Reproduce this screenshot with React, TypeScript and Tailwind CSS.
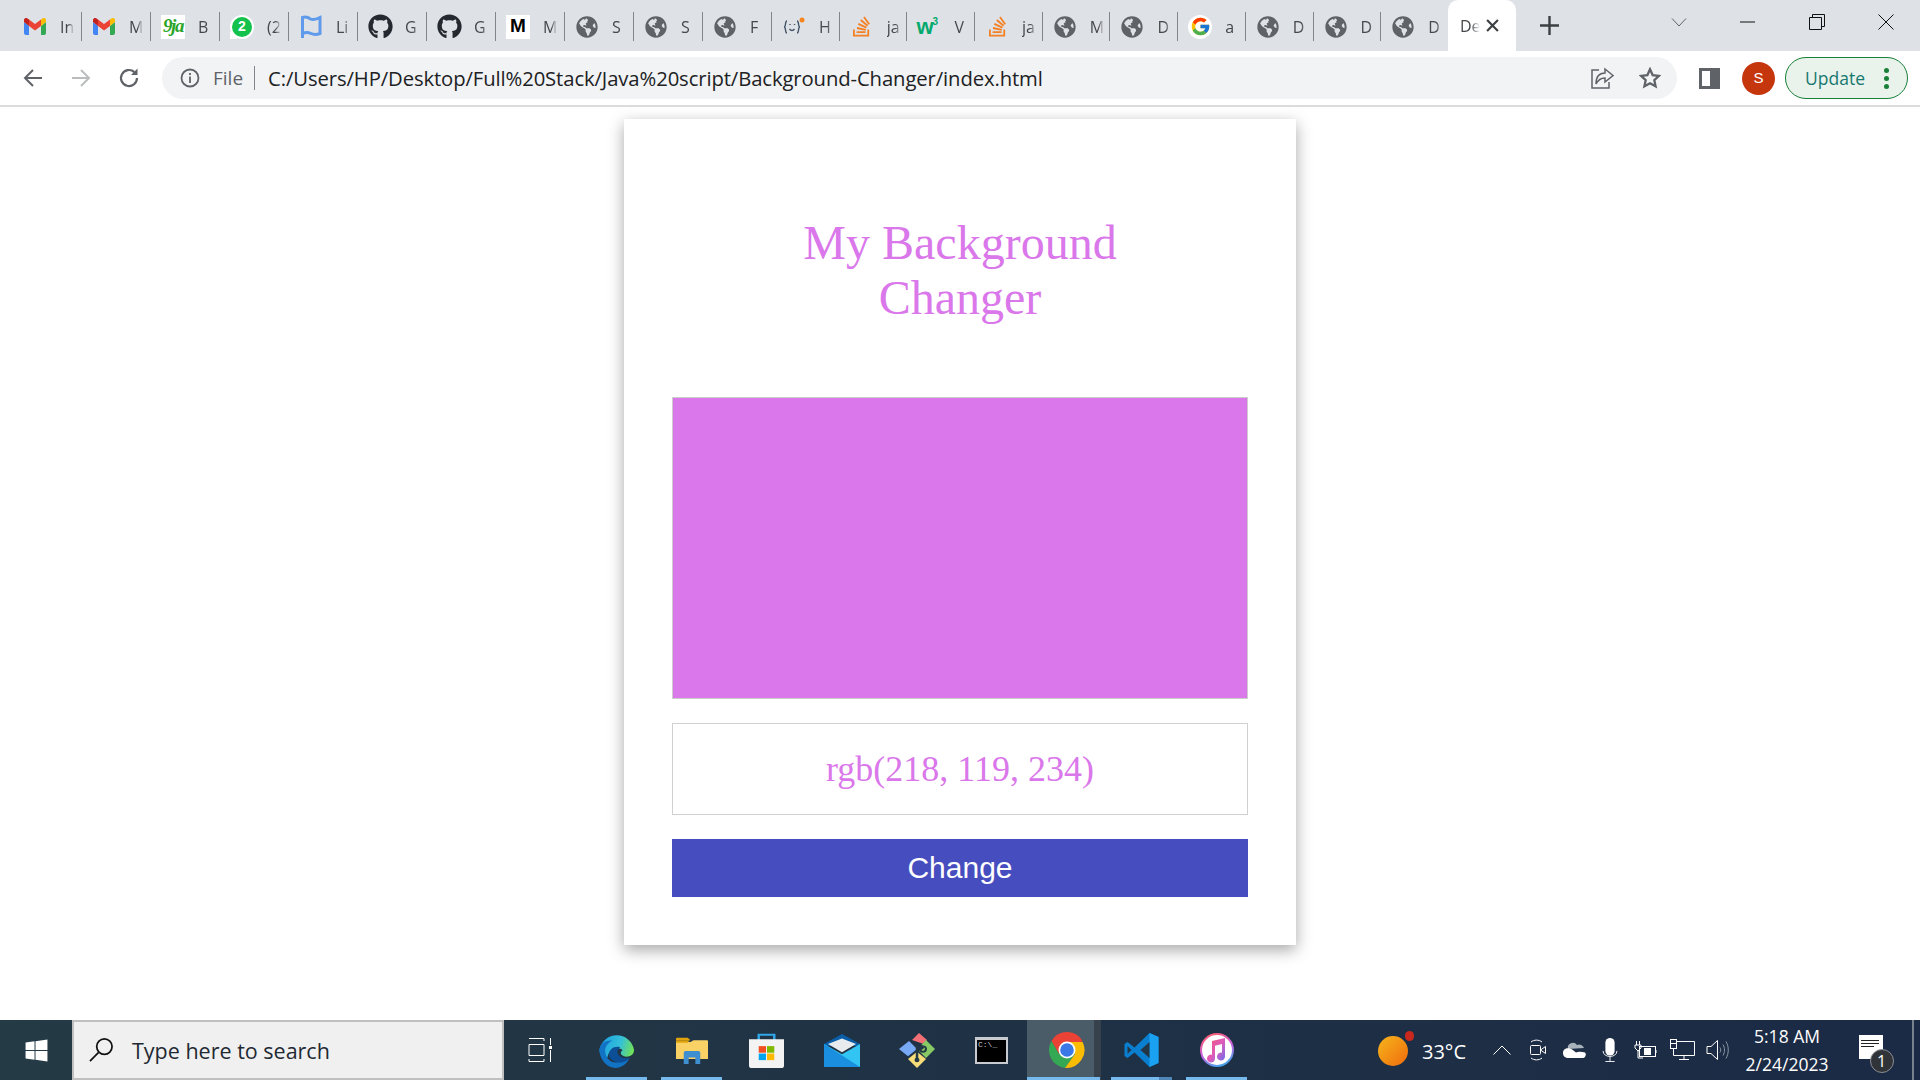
import React from "react";
import { FaGithub, FaGlobeAmericas, FaStackOverflow, FaWindows } from "react-icons/fa";
import { FcGoogle } from "react-icons/fc";

const Gmail = () => (
  <svg width="22" height="17" viewBox="0 0 22 17">
    <path d="M0 4v11a2 2 0 0 0 2 2h3V8z" fill="#4285f4" />
    <path d="M22 4v11a2 2 0 0 1-2 2h-3V8z" fill="#34a853" />
    <path d="M5 8 11 12.5 17 8V1.5L11 6 5 1.5z" fill="#ea4335" />
    <path d="M0 4 5 8V1.5L3.2.3A2 2 0 0 0 0 2z" fill="#c5221f" />
    <path d="M22 4 17 8V1.5L18.8.3A2 2 0 0 1 22 2z" fill="#fbbc04" />
  </svg>
);

const Nine = () => (
  <div className="w-[24px] h-[24px] bg-white flex items-center justify-center text-[19px] font-bold italic text-[#2aa52a] [font-family:'Liberation_Serif',serif] tracking-[-1.500px]">
    9ja
  </div>
);

const Whats = () => (
  <div className="relative w-[24px] h-[24px] rounded-full bg-white flex items-center justify-center">
    <div className="absolute left-0 bottom-0 w-[7px] h-[7px] bg-white" />
    <div className="relative w-[20px] h-[20px] rounded-full bg-[#12c24c] flex items-center justify-center text-white text-[14px] font-bold [font-family:'Liberation_Sans',sans-serif]">
      2
    </div>
  </div>
);

const Flag = () => (
  <svg width="22" height="24" viewBox="0 0 22 24" fill="none" stroke="#5f9bea" strokeWidth="3">
    <path d="M2.500 23V2.500c4-1.500 6 0 8 1.500 3 1.500 6 0 9.500-1.500v16c-4 1.500-6 1.500-9 0-3-1.500-5-1.500-8.500 0" />
  </svg>
);

const Medium = () => (
  <div className="w-[24px] h-[24px] bg-white flex items-center justify-center text-[19px] font-bold text-black [font-family:'Liberation_Sans',sans-serif]">
    M
  </div>
);

const Hacker = () => (
  <svg width="23" height="22" viewBox="0 0 23 22" fill="none" stroke="#44546a" strokeWidth="1.400">
    <path d="M4 5C1.500 5 3.500 11 1 11c2.500 0 .5 6 3 6M14 5c2.500 0 .5 6 3 6-2.500 0-.5 6-3 6" />
    <path d="M6.500 13c1.500 2 3.500 2 5 0M7 8v1M11.500 8v1" />
    <circle cx="19" cy="4" r="2.500" fill="#f6851f" stroke="none" />
  </svg>
);

const W3 = () => (
  <div className="w-[26px] flex items-start text-[#04aa6d] font-bold [font-family:'Liberation_Sans',sans-serif]">
    <span className="text-[22px] leading-[22px] tracking-[-1px]">w</span>
    <span className="text-[10px] leading-[12px]">3</span>
  </div>
);

const Globe = () => <FaGlobeAmericas className="text-[#5f6368]" size={22} />;
const Gh = () => <FaGithub className="text-[#24292f]" size={25} />;
const So = () => <FaStackOverflow className="text-[#f48024]" size={23} />;
const G = () => (
  <div className="w-[24px] h-[24px] rounded-full bg-white flex items-center justify-center">
    <FcGoogle size={21} />
  </div>
);

const tabs: [React.ReactNode, string, string][] = [
  [<Gmail />, "In", "w-[69px]"],
  [<Gmail />, "M", "w-[69px]"],
  [<Nine />, "B", "w-[69px]"],
  [<Whats />, "(2", "w-[69px]"],
  [<Flag />, "Li", "w-[69px]"],
  [<Gh />, "G", "w-[69px]"],
  [<Gh />, "G", "w-[69px]"],
  [<Medium />, "M", "w-[69px]"],
  [<Globe />, "S", "w-[69px]"],
  [<Globe />, "S", "w-[69px]"],
  [<Globe />, "F", "w-[69px]"],
  [<Hacker />, "H", "w-[67.700px]"],
  [<So />, "ja", "w-[67.700px]"],
  [<W3 />, "V", "w-[67.700px]"],
  [<So />, "ja", "w-[67.700px]"],
  [<Globe />, "M", "w-[67.700px]"],
  [<Globe />, "D", "w-[67.700px]"],
  [<G />, "a", "w-[67.700px]"],
  [<Globe />, "D", "w-[67.700px]"],
  [<Globe />, "D", "w-[67.700px]"],
  [<Globe />, "D", "w-[67.700px]"],
];

const TabStrip = () => (
  <div className="h-[51px] bg-[#dee1e6] flex pl-[13px]">
    {tabs.map(([icon, label, w], i) => (
      <div key={i} className={`${w} h-[37px] mt-[8px] flex items-center relative shrink-0`}>
        <div className="w-[44px] flex justify-center shrink-0">{icon}</div>
        <div className="w-[14px] ml-[3px] overflow-hidden whitespace-nowrap text-[16px] text-[#45474a] [font-family:'Open_Sans',sans-serif] [mask-image:linear-gradient(to_right,black_60%,transparent)]">
          {label}
        </div>
        {i < 20 && <div className="absolute right-0 top-[4px] w-[1px] h-[29px] bg-[#80868b]" />}
      </div>
    ))}
    <div className="w-[68px] h-[51px] -ml-[1px] bg-white rounded-t-[10px] flex items-center shrink-0 relative z-10">
      <div className="w-[20px] ml-[12px] overflow-hidden text-[16px] text-[#45474a] [font-family:'Open_Sans',sans-serif] [mask-image:linear-gradient(to_right,black_55%,transparent)]">
        De
      </div>
      <svg width="13" height="13" viewBox="0 0 12 12" className="ml-[6px]" stroke="#3c4043" strokeWidth="2">
        <path d="M1 1l10 10M11 1 1 11" />
      </svg>
    </div>
    <div className="w-[66px] flex items-center justify-center shrink-0 pl-[1px]">
      <svg width="19" height="19" viewBox="0 0 19 19" stroke="#3c4043" strokeWidth="2.400">
        <path d="M9.500 0v19M0 9.500h19" />
      </svg>
    </div>
    <div className="flex-1 flex justify-end items-start">
      <div className="w-[66px] h-[44px] flex items-center justify-center">
        <svg width="16" height="9" viewBox="0 0 16 9" fill="none" stroke="#5f6368"><path d="M1 .5l7 7.500 7-7.500" /></svg>
      </div>
      <div className="w-[70px] h-[44px] flex items-center justify-center">
        <svg width="15" height="2" viewBox="0 0 15 2" stroke="#111"><path d="M0 1h15" /></svg>
      </div>
      <div className="w-[70px] h-[44px] flex items-center justify-center">
        <svg width="16" height="16" viewBox="0 0 16 16" fill="none" stroke="#111"><path d="M.5 3.500h12v12H.5zM3.500 3.500v-3h12v12h-3" /></svg>
      </div>
      <div className="w-[68px] h-[44px] flex items-center justify-center">
        <svg width="16" height="16" viewBox="0 0 16 16" stroke="#111"><path d="M.5.500l15 15M15.500.500l-15 15" /></svg>
      </div>
    </div>
  </div>
);

const Toolbar = () => (
  <div className="h-[56px] bg-white border-b-2 border-[#dcdcdc] flex items-start pt-[6px]">
    <div className="w-[162px] h-[42px] flex items-center shrink-0">
      <svg width="20" height="20" viewBox="0 0 20 20" className="ml-[23px]" fill="none" stroke="#5f6368" strokeWidth="2"><path d="M19 10H2M10 2 2 10l8 8" /></svg>
      <svg width="20" height="20" viewBox="0 0 20 20" className="ml-[28px]" fill="none" stroke="#babcbe" strokeWidth="2"><path d="M1 10h17M10 2l8 8-8 8" /></svg>
      <svg width="24" height="24" viewBox="0 0 24 24" className="ml-[26px]" fill="none" stroke="#5f6368" strokeWidth="2.200"><path d="M20 12a8 8 0 1 1-2.600-5.900" /><path d="M20.500 2.500v6.500H14" fill="#5f6368" stroke="none" /></svg>
    </div>
    <div className="w-[1515px] h-[42px] rounded-full bg-[#f1f3f4] flex items-center shrink-0 text-[20px] text-[#202124] [font-family:'Open_Sans',sans-serif]">
      <svg width="20" height="20" viewBox="0 0 20 20" className="ml-[18px]" fill="none" stroke="#5f6368" strokeWidth="1.800">
        <circle cx="10" cy="10" r="8.500" />
        <path d="M10 8.500V15M10 5v2" />
      </svg>
      <span className="ml-[13px] text-[#5f6368] text-[19px]">File</span>
      <div className="w-[1px] h-[24px] bg-[#80868b] ml-[11px]" />
      <span className="ml-[13px] text-[20.250px] tracking-[-0.100px] whitespace-nowrap">C:/Users/HP/Desktop/Full%20Stack/Java%20script/Background-Changer/index.html</span>
      <svg width="24" height="24" viewBox="0 0 24 24" className="ml-auto -mr-[1px]" fill="none" stroke="#5f6368" strokeWidth="1.500">
        <path d="M9 4H2v18h17v-6" />
        <path d="M23 9.500 15 3v4c-6 0-9 4-9 11 2-4 4-6 9-6v4z" />
      </svg>
      <svg width="22" height="22" viewBox="0 0 24 24" className="ml-[26px] mr-[16px]" fill="none" stroke="#5f6368" strokeWidth="2.500">
        <path d="m12 2.500 2.900 6.300 6.900.8-5.100 4.700 1.400 6.800-6.100-3.400-6.100 3.400 1.400-6.800L2.300 9.600l6.900-.8z" />
      </svg>
    </div>
    <div className="h-[42px] flex items-center shrink-0">
      <div className="ml-[22px] w-[21px] h-[21px] border-[3px] border-[#5f6368] flex justify-end">
        <div className="w-[7px] h-full bg-[#5f6368]" />
      </div>
      <div className="ml-[22px] w-[33px] h-[33px] rounded-full bg-[#c5360d] flex items-center justify-center text-white text-[15px] [font-family:'Liberation_Sans',sans-serif]">
        S
      </div>
      <div className="ml-[10px] w-[123px] h-[42px] rounded-full border border-[#188038] bg-[#e9f3ec] flex items-center text-[17.500px] text-[#17786f] [font-family:'Open_Sans',sans-serif]">
        <span className="ml-[19px]">Update</span>
        <div className="ml-auto mr-[18px] flex flex-col gap-[3px]">
          <div className="w-[5px] h-[5px] rounded-full bg-[#188038]" />
          <div className="w-[5px] h-[5px] rounded-full bg-[#188038]" />
          <div className="w-[5px] h-[5px] rounded-full bg-[#188038]" />
        </div>
      </div>
    </div>
  </div>
);

const Edge = () => (
  <svg width="37" height="36" viewBox="0 0 38 38">
    <defs>
      <linearGradient id="ed1" x1="0" y1="0.300" x2="1" y2="0.500"><stop offset="0" stopColor="#1b9de2" /><stop offset="0.600" stopColor="#35c1d8" /><stop offset="1" stopColor="#6fe05a" /></linearGradient>
    </defs>
    <path d="M1 19A18.500 18.500 0 0 1 37.500 19c0 5-4 7-8 7-4 0-6-2-6-4 0-1 1-2 2-3-4-3-11-2-14 2-1 2-2 4-2 6-5-1-8.500-4-8.500-8z" fill="url(#ed1)" />
    <path d="M1 19c0-7 7-11 14-10-5 2-8 6-8 11 0 6 5 13 13 12 6 0 10-2 13-5-3 7-9 11-15 11C9 38 1 29 1 19z" fill="#1272c4" />
    <path d="M11 24c0-6 6-10 12-8-3 2-4 5-2 8 2 3 7 5 12 3-3 4-8 6-13 5-5-1-9-4-9-8z" fill="#0d4f96" />
  </svg>
);

const Chrome = () => (
  <svg width="36" height="36" viewBox="0 0 36 36">
    <path d="M18 18 33.600 9A18 18 0 0 0 2.400 9L10 22z" fill="#ea4335" />
    <path d="M18 18 10 22 2.400 9A18 18 0 0 0 16 35.900L26 22z" fill="#34a853" />
    <path d="M18 10h15.600A18 18 0 0 1 16 35.900L26 22z" fill="#fbbc04" />
    <circle cx="18" cy="18" r="8.500" fill="#fff" />
    <circle cx="18" cy="18" r="6.800" fill="#3b78e7" />
  </svg>
);

const Vs = () => (
  <svg width="37" height="36" viewBox="0 0 36 36">
    <path d="M26 1 35 5v26l-9 4-15-14.500L4 26l-3-2v-12l3-2 7 5.500z" fill="#0a7fd0" />
    <path d="M26 1 35 5v26l-9 4z" fill="#1ba1f1" />
    <path d="M26 10v16l-9-8z" fill="#233646" />
    <path d="M4 14v8l4-4z" fill="#233646" />
  </svg>
);

const Folder = () => (
  <svg width="32" height="27" viewBox="0 0 33 33" preserveAspectRatio="none">
    <path d="M0 2a1 1 0 0 1 1-1h11l3 3H0z" fill="#e0a30d" />
    <path d="M0 6h15l3-2h14a1 1 0 0 1 1 1v22H0z" fill="#fad165" />
    <path d="M0 4h14l-2 3H0z" fill="#e0a30d" />
    <path d="M8 33V19a2 2 0 0 1 2-2h13a2 2 0 0 1 2 2v14h-5v-8h-7v8z" fill="#3f8ecf" />
  </svg>
);

const Store = () => (
  <svg width="35" height="35" viewBox="0 0 36 40" preserveAspectRatio="none">
    <path d="M10 8V2h16v6" fill="none" stroke="#2fa7e8" strokeWidth="2.500" />
    <path d="M0 7h36v30a3 3 0 0 1-3 3H3a3 3 0 0 1-3-3z" fill="#f3f3f3" />
    <rect x="10" y="15" width="7.500" height="7.500" fill="#f25022" />
    <rect x="18.500" y="15" width="7.500" height="7.500" fill="#7fba00" />
    <rect x="10" y="23.500" width="7.500" height="7.500" fill="#00a4ef" />
    <rect x="18.500" y="23.500" width="7.500" height="7.500" fill="#ffb900" />
  </svg>
);

const Mail = () => (
  <svg width="36" height="33" viewBox="0 0 36 36" preserveAspectRatio="none">
    <path d="M0 11 18 0l18 11v2H0z" fill="#0a5ea8" />
    <path d="M4 11 18 5l14 6-14 9z" fill="#e8ecef" />
    <path d="M0 11 18 22 36 11v25H0z" fill="#32c5f4" />
    <path d="M0 11 36 36H0z" fill="#1a8fdf" />
  </svg>
);

const Git = () => (
  <svg width="36" height="36" viewBox="0 0 36 40" preserveAspectRatio="none">
    <path d="M13 9 20 1l8 8-4 4z" fill="#f07075" />
    <path d="M10 10 18 19 9 27 0 19z" fill="#78a9f5" />
    <path d="M27 9l9 10-9 10-7-8 4-2c2-2 0-5-2-4z" fill="#86c965" />
    <path d="M18 22l9 8-9 10-9-10z" fill="#f6dd79" />
    <path d="M18 15v16" stroke="#233a45" strokeWidth="2.500" />
    <circle cx="18" cy="31" r="2.500" fill="#233a45" />
    <circle cx="24" cy="19" r="3" fill="none" stroke="#233a45" strokeWidth="2" />
  </svg>
);

const Cmd = () => (
  <div className="w-[33px] h-[27px] bg-black border-[2px] border-t-[3px] border-[#c8ccd0] text-[8px] leading-[10px] text-[#cccccc] pl-[1px] [font-family:'Liberation_Mono',monospace]">
    C:\_
  </div>
);

const Itunes = () => (
  <svg width="34" height="34" viewBox="0 0 34 34">
    <defs>
      <linearGradient id="it1" x1="0.300" y1="0" x2="0.700" y2="1"><stop offset="0" stopColor="#fb5c74" /><stop offset="0.500" stopColor="#c65fe0" /><stop offset="1" stopColor="#3fa9ee" /></linearGradient>
      <linearGradient id="it2" x1="0" y1="0" x2="1" y2="1"><stop offset="0" stopColor="#f0566e" /><stop offset="0.500" stopColor="#e05bb8" /><stop offset="1" stopColor="#6a6ff0" /></linearGradient>
    </defs>
    <circle cx="17" cy="17" r="16" fill="#fff" stroke="url(#it1)" strokeWidth="2" />
    <path d="M12 8 25 5v18.500a4 4 0 1 1-3-3.800V11l-7 1.700v12.800a4 4 0 1 1-3-3.800z" fill="url(#it2)" />
  </svg>
);

const TaskView = () => (
  <svg width="24" height="24" viewBox="0 0 24 24" fill="none" stroke="#fff">
    <path d="M1 .5h15v2.500M16 21v2.500H1V21M1 6.500h15v11H1zM22.500 0v7M22.500 12v12" />
    <rect x="21" y="8" width="3" height="3" fill="#fff" stroke="none" />
  </svg>
);

const App1 = ({ children, bar, active, split }: { children: React.ReactNode; bar?: boolean; active?: boolean; split?: boolean }) => (
  <div className="w-[75px] h-[60px] relative flex items-center justify-center">
    {active && <div className="absolute left-[-2px] top-0 bottom-0 w-[67px] bg-[#4a5c68]" />}
    {active && <div className="absolute left-[65px] top-0 bottom-0 w-[7px] bg-[#37414c]" />}
    <div className="relative">{children}</div>
    {bar && <div className="absolute bottom-0 left-[7px] w-[61px] h-[3px] bg-[#76b9ed]" />}
    {active && <div className="absolute bottom-0 left-[-2px] w-[73px] h-[3px] bg-[#76b9ed]" />}
    {split && <div className="absolute bottom-0 left-[55px] w-[13px] h-[3px] bg-[#4f86b5]" />}
  </div>
);

const TrayCell = ({ children }: { children: React.ReactNode }) => (
  <div className="w-[36px] flex items-center justify-center">{children}</div>
);

const Taskbar = () => (
  <div className="h-[60px] bg-gradient-to-r from-[#243a45] to-[#1b2a45] flex shrink-0 relative">
    <div className="w-[72px] flex items-center justify-center shrink-0">
      <FaWindows size={25} className="text-white" />
    </div>
    <div className="w-[432px] h-[60px] border-[2px] border-[#c0c0c0] bg-[#f0f0f0] flex items-center shrink-0 text-[#1f2933] text-[21.500px] [font-family:'Open_Sans',sans-serif]">
      <svg width="25" height="25" viewBox="0 0 26 26" className="ml-[15px] mt-[-2px]" fill="none" stroke="#111" strokeWidth="1.800">
        <circle cx="16" cy="10" r="8" />
        <path d="M10 16 1 25" />
      </svg>
      <span className="ml-[18px] mt-[3px]">Type here to search</span>
    </div>
    <App1><div className="-ml-[4px]"><TaskView /></div></App1>
    <App1 bar><Edge /></App1>
    <App1 bar><Folder /></App1>
    <App1><Store /></App1>
    <App1><Mail /></App1>
    <App1><Git /></App1>
    <App1><Cmd /></App1>
    <App1 active><Chrome /></App1>
    <App1 bar split><Vs /></App1>
    <App1 bar><Itunes /></App1>
    <div className="ml-[124px] flex items-center text-white [font-family:'Open_Sans',sans-serif]">
      <div className="relative w-[30px] h-[30px] rounded-full bg-gradient-to-br from-[#f5b51c] to-[#ee6a0c] mt-[1px]">
        <div className="absolute top-[-5px] right-[-6px] w-[9px] h-[10px] rounded-full bg-[#c8281e]" />
      </div>
      <div className="w-[58px] text-right text-[20px] mt-[3px]">33°C</div>
      <div className="flex ml-[18px]">
        <TrayCell>
          <svg width="18" height="10" viewBox="0 0 18 10" fill="none" stroke="#fff"><path d="M.5 9.500 9 1l8.500 8.500" /></svg>
        </TrayCell>
        <TrayCell>
          <svg width="18" height="22" viewBox="0 0 18 22" fill="none" stroke="#fff">
            <rect x="1.500" y="6.500" width="10" height="9" rx="1" />
            <path d="M11.500 11 16.500 7.500v7zM2 3c3-2.500 8-2.500 11 0M2 19c3 2.500 8 2.500 11 0" />
          </svg>
        </TrayCell>
        <TrayCell>
          <svg width="24" height="16" viewBox="0 0 24 16">
            <path d="M6 7a5 5 0 0 1 9-4 5 5 0 0 1 7 3z" fill="#a8b2bb" />
            <path d="M5 16a5 5 0 0 1-1-9.500c5-1 7 2 10 4 2-1 6-1 9 0 2 2 0 5.500-2 5.500z" fill="#fff" />
          </svg>
        </TrayCell>
        <TrayCell>
          <svg width="18" height="24" viewBox="0 0 18 26" fill="none" stroke="#fff">
            <rect x="4" y="0" width="10" height="19" rx="5" fill="#fff" stroke="none" />
            <path d="M1.500 14c0 8 15 8 15 0M9 20v5M4 25.500h10" />
          </svg>
        </TrayCell>
        <TrayCell>
          <svg width="24" height="18" viewBox="0 0 24 18" fill="none" stroke="#fff">
            <rect x="5.500" y="5.500" width="16" height="10" />
            <rect x="10" y="7" width="7" height="7" fill="#fff" stroke="none" />
            <path d="M22 9v3M1 4h6v3l-3 3-3-3zM2.500 0v4M5.500 0v4M4 10v7h5" />
          </svg>
        </TrayCell>
        <TrayCell>
          <svg width="26" height="22" viewBox="0 0 26 22" fill="none" stroke="#fff">
            <rect x="1.500" y=".5" width="6" height="9" />
            <path d="M7.500 2.500h18v14h-21V9.500M15 16.500v4M10 20.500h10M1.500 4.500h6" />
          </svg>
        </TrayCell>
        <TrayCell>
          <svg width="24" height="22" viewBox="0 0 24 22" fill="none" stroke="#fff">
            <path d="M1 7.500h4L11.500 1.500v19L5 14.500H1z" />
            <path d="M14 8.500c1 1.500 1 3.500 0 5M17 5.500c2 3.500 2 7.500 0 11M20 2.500c3 5 3 12 0 17" stroke="#8b98a3" />
          </svg>
        </TrayCell>
      </div>
      <div className="w-[102px] flex flex-col items-center text-[17.500px] leading-[28px]">
        <span>5:18 AM</span>
        <span>2/24/2023</span>
      </div>
      <div className="w-[64px] h-[60px] flex items-center justify-center">
        <div className="relative w-[24px] h-[24px] bg-white mt-[-6px] mr-[-1px] flex flex-col gap-[2px] pt-[5px] pl-[2px]">
          <div className="w-[18px] h-[1px] bg-[#222]" />
          <div className="w-[18px] h-[1px] bg-[#222]" />
          <div className="w-[13px] h-[1px] bg-[#222]" />
          <div className="absolute left-[11px] top-[14px] w-[24px] h-[24px] rounded-full bg-[#303338] border border-[#8b8f94] flex items-center justify-center text-[16px] text-white">1</div>
        </div>
      </div>
    </div>
    <div className="absolute left-[1912px] top-0 bottom-0 w-[2px] bg-[#76818c]" />
  </div>
);

export default function App() {
  return (
    <div className="w-[1920px] h-[1080px] flex flex-col bg-white overflow-hidden">
      <TabStrip />
      <Toolbar />
      <main className="flex-1 flex justify-center items-start pt-[12px]">
        <div className="w-[672px] h-[826px] bg-white p-[48px] shadow-[0_5px_15px_rgba(0,0,0,0.35)] [font-family:'Liberation_Serif',serif]">
          <h1 className="py-[48px] mx-auto w-[400px] text-center text-[48px] leading-[55px] text-[#da77ea] font-normal">
            My Background Changer
          </h1>
          <div className="mt-[24px] h-[302px] bg-[#da77ea] border border-[#cccccc]" />
          <div className="mt-[24px] h-[92px] border-[1.500px] border-[#d0d0d0] flex items-center justify-center text-[36px] text-[#da77ea]">
            rgb(218, 119, 234)
          </div>
          <button className="block mt-[24px] w-full h-[58px] pb-[2px] bg-[#464dbf] text-white text-[30px] [font-family:'Liberation_Sans',sans-serif]">
            Change
          </button>
        </div>
      </main>
      <Taskbar />
    </div>
  );
}
